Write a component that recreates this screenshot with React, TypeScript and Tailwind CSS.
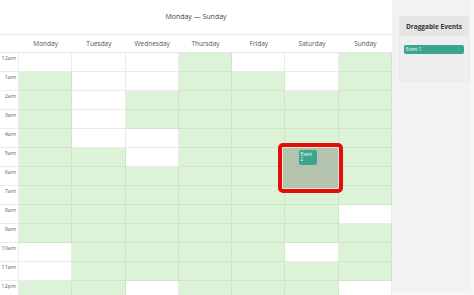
const days = ['Monday', 'Tuesday', 'Wednesday', 'Thursday', 'Friday', 'Saturday', 'Sunday'];

// 1 = available (green), 0 = free
const rows: { label: string; cells: number[] }[] = [
  { label: '12am', cells: [0, 0, 0, 1, 0, 0, 1] },
  { label: '1am', cells: [1, 0, 0, 1, 1, 0, 1] },
  { label: '2am', cells: [1, 0, 1, 1, 1, 1, 1] },
  { label: '3am', cells: [1, 0, 1, 1, 1, 1, 1] },
  { label: '4am', cells: [1, 0, 0, 1, 1, 1, 1] },
  { label: '5am', cells: [1, 1, 0, 1, 1, 1, 1] },
  { label: '6am', cells: [1, 1, 1, 1, 1, 1, 1] },
  { label: '7am', cells: [1, 1, 1, 1, 1, 1, 1] },
  { label: '8am', cells: [1, 1, 1, 1, 1, 1, 0] },
  { label: '9am', cells: [1, 1, 1, 1, 1, 1, 1] },
  { label: '10am', cells: [0, 1, 1, 1, 1, 0, 1] },
  { label: '11am', cells: [0, 1, 1, 1, 1, 1, 1] },
  { label: '12pm', cells: [1, 1, 0, 1, 1, 1, 0] },
];

export default function App() {
  return (
    <div
      className="w-[474px] h-[295px] flex bg-white overflow-hidden text-[#444]"
      style={{ fontFamily: '"Open Sans", "Liberation Sans", sans-serif' }}
    >
      <div className="relative w-[392px] flex flex-col shrink-0">
        <div className="h-[35px] shrink-0 flex items-center justify-center border-b border-[#ececec] text-[7px] text-[#444]">
          Monday — Sunday
        </div>
        <div className="grid shrink-0 grid-cols-[19px_repeat(7,minmax(0,1fr))] h-[18px] border-b border-[#e6e6e6]">
          <div />
          {days.map((d) => (
            <div key={d} className="flex items-center justify-center text-[6.5px] text-[#555]">
              {d}
            </div>
          ))}
        </div>
        <div className="grid shrink-0 grid-cols-[19px_repeat(7,minmax(0,1fr))] auto-rows-[19px]">
          {rows.map((r) => (
            <div key={r.label} className="contents">
              <div className="border-r border-b border-[#ececec] text-[5.5px] text-[#666] text-right pr-[2px] pt-[3px] leading-none">
                {r.label}
              </div>
              {r.cells.map((c, i) => (
                <div
                  key={i}
                  className={
                    c
                      ? 'bg-[#dcf3d7] border-r border-b border-[#cfe5c9]'
                      : 'bg-white border-r border-b border-[#ebebeb]'
                  }
                />
              ))}
            </div>
          ))}
        </div>

        {/* selected drop target */}
        <div className="absolute left-[278px] top-[143px] w-[65px] h-[50px] rounded-[5px] border-[4px] border-[#e30e0e] bg-[#efe8cc] p-[1px]">
          <div className="w-full h-full bg-[#b3c3ae] relative">
            <div className="absolute left-[16px] top-[2px] w-[18px] h-[15px] rounded-[2px] bg-[#3aa690] text-white text-[4.5px] leading-[5px] px-[1.5px] pt-[1.5px]">
              Event 2
            </div>
          </div>
        </div>
      </div>

      <div className="flex-1 bg-[#f8f8f8]">
        <div className="w-[79px] h-[292px] bg-[#f2f2f2] pt-[16px] pl-[7px]">
          <div className="w-[70px] h-[66px] bg-[#efefef] border border-[#e9e9e9]">
            <div className="h-[19px] bg-[#e5e5e5] flex items-center justify-center text-[6.5px] font-bold text-[#333]">
              Draggable Events
            </div>
            <div className="px-[4px] pt-[9px]">
              <div className="h-[9px] rounded-[2px] bg-[#3aa690] text-white text-[4.5px] leading-[9px] px-[2px]">
                Event 1
              </div>
            </div>
          </div>
        </div>
      </div>
    </div>
  );
}
